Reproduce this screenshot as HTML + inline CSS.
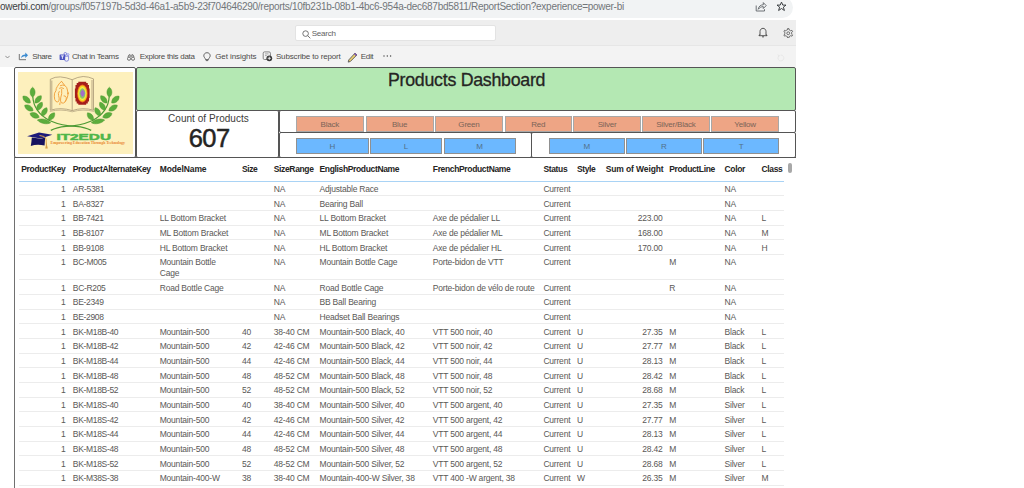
<!DOCTYPE html>
<html><head><meta charset="utf-8">
<style>
*{box-sizing:border-box;margin:0;padding:0}
html,body{width:1024px;height:488px;overflow:hidden;background:#fff;font-family:"Liberation Sans",sans-serif}
.abs{position:absolute}
#url{position:absolute;left:-20px;top:-3.5px;width:813px;height:21px;background:#f1f3f4;border-radius:0 10.5px 10.5px 0}
#urltext{position:absolute;left:0;top:0.8px;font-size:10px;line-height:12px;color:#72767a;white-space:nowrap;letter-spacing:-0.28px}
#urltext b{font-weight:normal;color:#3c4043}
#hdr{position:absolute;left:0;top:20px;width:796px;height:26px;background:#eeeeee;border-bottom:1px solid #e6e6e6}
#search{position:absolute;left:295px;top:24.8px;width:200.5px;height:16.6px;background:#fff;border:1px solid #e3e3e3;border-radius:2px}
#search span{position:absolute;left:15.7px;top:3px;font-size:8px;line-height:10px;color:#616161;letter-spacing:-0.22px}
#act{position:absolute;left:0;top:46px;width:796px;height:21px;background:#f3f3f3}
.ai{position:absolute;top:52px;font-size:8px;line-height:10px;color:#4d4b49;white-space:nowrap}
.box{position:absolute;border:1.5px solid #555;background:#fff;border-radius:2px}
.th{position:absolute;top:164px;font-size:8.5px;line-height:10px;font-weight:bold;color:#252423;white-space:nowrap;letter-spacing:-0.35px}
.row{position:absolute;left:0;width:1024px}
.row::after{content:"";position:absolute;left:19px;width:765px;bottom:0;height:1px;background:#ececec}
.td{position:absolute;top:2.4px;font-size:8.5px;line-height:10.45px;color:#5a5856;white-space:nowrap;letter-spacing:-0.2px}
.r{text-align:right}
.btn{position:absolute;background:#eea585;border:1px solid #a8a8a8;font-size:8px;line-height:15.5px;text-align:center;color:#7a6458;letter-spacing:-0.2px}
.btnb{position:absolute;background:#6cb8ff;border:1px solid #909090;font-size:8px;line-height:15.5px;text-align:center;color:#52708a}
</style></head><body>
<div id="url"></div>
<div id="urltext"><b>owerbi.com</b>/groups/f057197b-5d3d-46a1-a5b9-23f704646290/reports/10fb231b-08b1-4bc6-954a-dec687bd5811/ReportSection?experience=power-bi</div>
<!-- url icons -->
<svg class="abs" style="left:754.5px;top:1px" width="12" height="11" viewBox="0 0 12 11"><path d="M1.2 4.5V10H9.5V8.2" fill="none" stroke="#5f6368" stroke-width="0.9"/><path d="M3.2 8.3C3.6 5.3 5.8 3.8 8.3 3.8V1.6L11.2 4.6L8.3 7.5V5.6C6.3 5.6 4.6 6.6 3.2 8.3Z" fill="none" stroke="#5f6368" stroke-width="0.9" stroke-linejoin="round"/></svg>
<svg class="abs" style="left:776.3px;top:1.3px" width="11" height="11" viewBox="0 0 11 11"><path d="M5.5 1.1L6.8 4.1H10L7.4 6.1L8.4 9.5L5.5 7.5L2.6 9.5L3.6 6.1L1 4.1H4.2Z" fill="none" stroke="#3c4043" stroke-width="1" stroke-linejoin="round"/></svg>
<div id="hdr"></div>
<div id="search">
<svg class="abs" style="left:5.5px;top:3.8px" width="9" height="9" viewBox="0 0 9 9"><circle cx="3.6" cy="3.6" r="2.8" fill="none" stroke="#666" stroke-width="0.9"/><path d="M5.6 5.6L8.3 8.3" stroke="#666" stroke-width="0.9"/></svg>
<span>Search</span></div>
<svg class="abs" style="left:758px;top:27px" width="10" height="11" viewBox="0 0 10 11"><path d="M2 8V4.5C2 2.7 3.3 1.3 5 1.3S8 2.7 8 4.5V8H9V8.7H1V8Z" fill="none" stroke="#444" stroke-width="0.9"/><path d="M4 9.5Q5 10.8 6 9.5" fill="none" stroke="#444" stroke-width="0.9"/></svg>
<svg class="abs" style="left:783.2px;top:27.7px" width="10.5" height="10.5" viewBox="0 0 11 11"><path d="M3.70,2.38 L4.57,2.02 L4.73,0.66 L6.27,0.66 L6.43,2.02 L7.30,2.38 L8.05,2.95 L9.31,2.42 L10.07,3.74 L8.98,4.57 L9.10,5.50 L8.98,6.43 L10.07,7.26 L9.31,8.58 L8.05,8.05 L7.30,8.62 L6.43,8.98 L6.27,10.34 L4.73,10.34 L4.57,8.98 L3.70,8.62 L2.95,8.05 L1.69,8.58 L0.93,7.26 L2.02,6.43 L1.90,5.50 L2.02,4.57 L0.93,3.74 L1.69,2.42 L2.95,2.95Z" fill="none" stroke="#4a4a4a" stroke-width="0.8" stroke-linejoin="round"/><circle cx="5.5" cy="5.5" r="1.5" fill="none" stroke="#4a4a4a" stroke-width="0.8"/></svg>
<div id="act"></div>
<svg class="abs" style="left:776.5px;top:53.5px" width="8" height="8" viewBox="0 0 9 9"><path d="M2 2.2A3.3 3.3 0 1 0 4.5 1.2" fill="none" stroke="#e4e4e4" stroke-width="0.9"/><path d="M1 0.6L2.2 2.6L3.8 1" fill="none" stroke="#e4e4e4" stroke-width="0.9"/></svg>
<svg class="abs" style="left:5px;top:55px" width="5" height="4" viewBox="0 0 5 4"><path d="M0.3 0.8L2.5 3L4.7 0.8" fill="none" stroke="#777" stroke-width="0.8"/></svg>
<svg class="abs" style="left:18px;top:51px" width="11" height="10" viewBox="0 0 11 10"><path d="M1.3 3V8.7H8" fill="none" stroke="#666" stroke-width="0.9"/><path d="M3 7.2C3.2 4.6 5.2 3.6 7.3 3.6V1.6L10 4.3L7.3 7V5.3C5.6 5.3 4.2 5.9 3 7.2Z" fill="#3a8ad0"/></svg>
<div class="ai" style="left:32.3px;letter-spacing:-0.41px">Share</div>
<svg class="abs" style="left:58.5px;top:51.5px" width="11" height="10" viewBox="0 0 11 10"><circle cx="6.3" cy="1.8" r="1.3" fill="none" stroke="#6a70d8" stroke-width="0.8"/><circle cx="9" cy="2.6" r="1" fill="none" stroke="#7b83eb" stroke-width="0.7"/><path d="M5.3 4.2H9.6V7.3Q9.6 9.2 7.6 9.2Q5.6 9.2 5.3 7.3Z" fill="none" stroke="#6a70d8" stroke-width="0.8"/><rect x="0.6" y="2.5" width="5.6" height="5.4" rx="0.6" fill="#4c53c2"/><path d="M1.9 3.9H4.9M3.4 3.9V6.9" stroke="#fff" stroke-width="0.85"/></svg>
<div class="ai" style="left:71.9px;letter-spacing:-0.33px">Chat in Teams</div>
<svg class="abs" style="left:126.5px;top:53.5px" width="8" height="7" viewBox="0 0 8 7"><circle cx="2" cy="4.7" r="1.6" fill="none" stroke="#555" stroke-width="0.8"/><circle cx="6" cy="4.7" r="1.6" fill="none" stroke="#555" stroke-width="0.8"/><path d="M1 3L2 0.8H3.2V3M4.8 3V0.8H6L7 3" fill="none" stroke="#555" stroke-width="0.8"/></svg>
<div class="ai" style="left:139.7px;letter-spacing:-0.27px">Explore this data</div>
<svg class="abs" style="left:202.5px;top:52px" width="8" height="10" viewBox="0 0 8 10"><path d="M4 0.7C2 0.7 0.8 2.2 0.8 3.8C0.8 5.3 2.3 6 2.5 7.6H5.5C5.7 6 7.2 5.3 7.2 3.8C7.2 2.2 6 0.7 4 0.7Z" fill="none" stroke="#444" stroke-width="0.8"/><path d="M2.8 8.6H5.2" stroke="#444" stroke-width="0.8"/></svg>
<div class="ai" style="left:215.2px;letter-spacing:-0.08px">Get insights</div>
<svg class="abs" style="left:261.5px;top:51.3px" width="12" height="11" viewBox="0 0 12 11"><rect x="1.2" y="0.9" width="7.2" height="7.6" rx="1.3" fill="none" stroke="#777" stroke-width="0.9"/><path d="M3 2.9H6.5M3 4.6H4.8" stroke="#888" stroke-width="0.7"/><circle cx="7.3" cy="7.3" r="2.9" fill="#3a3a3a"/><path d="M7.3 5.7V8.9M5.7 7.3H8.9" stroke="#fff" stroke-width="0.8"/></svg>
<div class="ai" style="left:275.9px;letter-spacing:-0.15px">Subscribe to report</div>
<svg class="abs" style="left:346.5px;top:51.5px" width="11" height="11" viewBox="0 0 11 11"><path d="M8 1.2L9.8 3L3.3 9.5L1.2 10.1L1.8 7.9Z" fill="#edd070" stroke="#555" stroke-width="0.9" stroke-linejoin="round"/><path d="M8 1.2L9.8 3L9 3.8L7.2 2Z" fill="#8a5cc0" stroke="#6a4a9a" stroke-width="0.6"/></svg>
<div class="ai" style="left:360.8px;letter-spacing:-0.35px">Edit</div>
<svg class="abs" style="left:382.7px;top:55.4px" width="9" height="2" viewBox="0 0 9 2"><circle cx="1" cy="1" r="0.7" fill="#444"/><circle cx="4.3" cy="1" r="0.7" fill="#444"/><circle cx="7.6" cy="1" r="0.7" fill="#444"/></svg>

<!-- dashboard -->
<div class="box" style="left:14px;top:67px;width:122px;height:91px"></div>
<div class="abs" style="left:18px;top:72px;width:115px;height:82px;background:#fdf0bd"></div>
<svg class="abs" style="left:0;top:0" width="140" height="160" viewBox="0 0 140 160">

<!-- book -->
<g fill="none" stroke="#a39272" stroke-width="0.75">
<path d="M50.3,79.3 Q55,76.6 60.3,76.9 Q66,77.3 72.2,79.7 Q78,76.8 83.2,76.5 Q88.5,76.6 93.5,78.9"/>
<path d="M50.3,79.3 V110.2 M93.5,78.9 V110.2 M72.2,79.7 V110.6 M51.8,80.5 V109.4 M92,80 V109.4"/>
<path d="M50.3,110.2 Q61,107 72.2,110.6 Q83,107 93.5,110.2"/>
<path d="M49.8,111.4 Q61,108.6 72.2,111.8 Q83,108.6 94,111.4" stroke-width="0.6"/>
</g>
<!-- ganesh -->
<g fill="none" stroke="#f2a543" stroke-width="1" stroke-linecap="round" stroke-linejoin="round">
<path d="M61.5,81.3 L64.6,85.3 Q67.3,87.3 67.4,90 Q68.4,93 67.8,95.8 Q67,99.2 65.3,101.3"/>
<path d="M61.5,81.3 Q58.6,84 57.4,86.4 Q55.8,88.5 56,90.6 Q54,93 54.3,96.2 Q54.3,100.2 56,101.6 Q58,102.6 59,100.8 Q59.6,98.2 58.6,95.6 Q57.8,93.5 59.2,91.5"/>
<path d="M61.7,89.3 Q62.2,94 60.7,97.9 Q60,101.4 61.4,102.9 Q63.4,103.8 65.2,101.9 Q66.6,99.6 66.3,97.6 Q65.6,95.5 64,95.8"/>
<path d="M59.5,88.2 Q61.5,86.8 63.6,88.4 M64.6,85.3 Q62.5,84.6 60.4,85.6 M60,102.8 L59.8,104.6"/>
</g>
<circle cx="68" cy="93.3" r="1" fill="#f2a543"/>
<!-- mandala -->
<path d="M78.3,81.8 H86.2 V83 H87.8 V85 H89 V88.5 H89.6 V98 H89 V101.5 H87.8 V103.5 H86.2 V104.7 H78.3 V103.5 H76.7 V101.5 H75.5 V98 H74.9 V88.5 H75.5 V85 H76.7 V83 H78.3Z" fill="#a51e1a"/>
<ellipse cx="82.4" cy="93.5" rx="5.3" ry="9" fill="#ee6a1e"/>
<ellipse cx="82.4" cy="93.5" rx="4.6" ry="8.1" fill="#f7d41c"/>
<ellipse cx="82.4" cy="93.5" rx="3.7" ry="6.5" fill="#f2ef5a"/>
<ellipse cx="82.4" cy="93.5" rx="3" ry="5.3" fill="#8dc860"/>
<path d="M82.6,89.2 L85,93.3 L82.6,97.5 L80.3,93.3Z" fill="#a771cc"/>
<ellipse cx="82.5" cy="93.3" rx="1.8" ry="2.9" fill="#a070c8"/>
<!-- laurel left -->
<g stroke="#4c9a34" stroke-width="1.2" fill="none"><path d="M32.8,96.5 Q33.5,112 50,120.8 Q62,126 76,126.4 Q85.5,127.3 91.2,130.4"/><path d="M109.2,96.5 Q108.5,112 92,120.8 Q80,126 66,126.4 Q56.5,127.3 50.8,130.4"/></g>
<path d="M0,-5 C3.3,-2.5 3.3,2.5 0,5 C-3.3,2.5 -3.3,-2.5 0,-5Z" fill="#5cad3c" stroke="#4e9a33" stroke-width="0.5" transform="translate(32.6,92.2) rotate(0) scale(1.0)"/>
<path d="M0,-5 C3.3,-2.5 3.3,2.5 0,5 C-3.3,2.5 -3.3,-2.5 0,-5Z" fill="#5cad3c" stroke="#4e9a33" stroke-width="0.5" transform="translate(109.4,92.2) rotate(0) scale(1.0)"/>
<path d="M0,-5 C3.3,-2.5 3.3,2.5 0,5 C-3.3,2.5 -3.3,-2.5 0,-5Z" fill="#5cad3c" stroke="#4e9a33" stroke-width="0.5" transform="translate(26.6,99.6) rotate(-47) scale(1.0)"/>
<path d="M0,-5 C3.3,-2.5 3.3,2.5 0,5 C-3.3,2.5 -3.3,-2.5 0,-5Z" fill="#5cad3c" stroke="#4e9a33" stroke-width="0.5" transform="translate(115.4,99.6) rotate(47) scale(1.0)"/>
<path d="M0,-5 C3.3,-2.5 3.3,2.5 0,5 C-3.3,2.5 -3.3,-2.5 0,-5Z" fill="#5cad3c" stroke="#4e9a33" stroke-width="0.5" transform="translate(28.9,108.0) rotate(-57) scale(1.0)"/>
<path d="M0,-5 C3.3,-2.5 3.3,2.5 0,5 C-3.3,2.5 -3.3,-2.5 0,-5Z" fill="#5cad3c" stroke="#4e9a33" stroke-width="0.5" transform="translate(113.1,108.0) rotate(57) scale(1.0)"/>
<path d="M0,-5 C3.3,-2.5 3.3,2.5 0,5 C-3.3,2.5 -3.3,-2.5 0,-5Z" fill="#5cad3c" stroke="#4e9a33" stroke-width="0.5" transform="translate(34.6,115.4) rotate(-67) scale(1.0)"/>
<path d="M0,-5 C3.3,-2.5 3.3,2.5 0,5 C-3.3,2.5 -3.3,-2.5 0,-5Z" fill="#5cad3c" stroke="#4e9a33" stroke-width="0.5" transform="translate(107.4,115.4) rotate(67) scale(1.0)"/>
<path d="M0,-5 C3.3,-2.5 3.3,2.5 0,5 C-3.3,2.5 -3.3,-2.5 0,-5Z" fill="#5cad3c" stroke="#4e9a33" stroke-width="0.5" transform="translate(44.0,121.4) rotate(-78) scale(0.85,1.35)"/>
<path d="M0,-5 C3.3,-2.5 3.3,2.5 0,5 C-3.3,2.5 -3.3,-2.5 0,-5Z" fill="#5cad3c" stroke="#4e9a33" stroke-width="0.5" transform="translate(98.0,121.4) rotate(78) scale(0.85,1.35)"/>
<path d="M0,-5 C3.3,-2.5 3.3,2.5 0,5 C-3.3,2.5 -3.3,-2.5 0,-5Z" fill="#5cad3c" stroke="#4e9a33" stroke-width="0.5" transform="translate(38.2,99.4) rotate(40) scale(0.95)"/>
<path d="M0,-5 C3.3,-2.5 3.3,2.5 0,5 C-3.3,2.5 -3.3,-2.5 0,-5Z" fill="#5cad3c" stroke="#4e9a33" stroke-width="0.5" transform="translate(103.8,99.4) rotate(-40) scale(0.95)"/>
<path d="M0,-5 C3.3,-2.5 3.3,2.5 0,5 C-3.3,2.5 -3.3,-2.5 0,-5Z" fill="#5cad3c" stroke="#4e9a33" stroke-width="0.5" transform="translate(39.6,106.3) rotate(33) scale(0.95)"/>
<path d="M0,-5 C3.3,-2.5 3.3,2.5 0,5 C-3.3,2.5 -3.3,-2.5 0,-5Z" fill="#5cad3c" stroke="#4e9a33" stroke-width="0.5" transform="translate(102.4,106.3) rotate(-33) scale(0.95)"/>
<path d="M0,-5 C3.3,-2.5 3.3,2.5 0,5 C-3.3,2.5 -3.3,-2.5 0,-5Z" fill="#5cad3c" stroke="#4e9a33" stroke-width="0.5" transform="translate(44.4,111.8) rotate(31) scale(0.95)"/>
<path d="M0,-5 C3.3,-2.5 3.3,2.5 0,5 C-3.3,2.5 -3.3,-2.5 0,-5Z" fill="#5cad3c" stroke="#4e9a33" stroke-width="0.5" transform="translate(97.6,111.8) rotate(-31) scale(0.95)"/>
<path d="M0,-5 C3.3,-2.5 3.3,2.5 0,5 C-3.3,2.5 -3.3,-2.5 0,-5Z" fill="#5cad3c" stroke="#4e9a33" stroke-width="0.5" transform="translate(51.6,116.6) rotate(38) scale(0.95)"/>
<path d="M0,-5 C3.3,-2.5 3.3,2.5 0,5 C-3.3,2.5 -3.3,-2.5 0,-5Z" fill="#5cad3c" stroke="#4e9a33" stroke-width="0.5" transform="translate(90.4,116.6) rotate(-38) scale(0.95)"/>
<!-- cap -->
<path d="M27.1,136.2 L39,132.6 L52.3,134.8 L41,138.6 Z" fill="#1d1a7a"/>
<path d="M31.8,137.4 Q31.5,142 30.8,146 Q37,143.8 44.6,145.6 Q44.8,141 45.3,137.2 L41,138.8 Z" fill="#16125f"/>
<path d="M39.5,135.5 Q45,136 46,138.5 L46.5,147.5" fill="none" stroke="#d9a04a" stroke-width="1"/>
<path d="M46.5,143 L47.8,148.5 H45.2 Z" fill="#d9a04a"/>
<text x="56.4" y="139.7" font-family="Liberation Sans" font-weight="bold" font-size="8.9" fill="#4fb649" stroke="#4fb649" stroke-width="0.45" textLength="54.6" lengthAdjust="spacingAndGlyphs">IT2EDU</text>
<text x="50.6" y="144.3" font-family="Liberation Serif" font-weight="bold" font-size="3.4" fill="#e8862e" textLength="74.4" lengthAdjust="spacingAndGlyphs">Empowering Education Through Technology</text>
</svg>
<div class="box" style="left:135.5px;top:67px;width:660px;height:44px;background:#b4e8b3"></div>
<div class="abs" style="left:388px;top:71px;font-size:17.8px;line-height:18px;color:#252423;letter-spacing:-0.27px;white-space:nowrap;-webkit-text-stroke:0.3px #252423">Products Dashboard</div>
<div class="box" style="left:135.5px;top:110px;width:143.5px;height:48px"></div>
<div class="abs" style="left:168px;top:113px;font-size:10px;line-height:11px;color:#403c3a;white-space:nowrap;letter-spacing:0.05px">Count of Products</div>
<div class="abs" style="left:188.7px;top:125.6px;font-size:25.5px;line-height:24px;color:#252423;white-space:nowrap;letter-spacing:-0.5px;-webkit-text-stroke:0.5px #252423">607</div>
<div class="box" style="left:278.5px;top:110px;width:517px;height:23px"></div>
<div class="box" style="left:278.5px;top:132px;width:253.5px;height:26px"></div>
<div class="box" style="left:530.5px;top:132px;width:265px;height:26px"></div>
<div class="btn" style="left:296.2px;top:116.3px;width:67.4px;height:15.6px">Black</div>
<div class="btn" style="left:365.5px;top:116.3px;width:68.1px;height:15.6px">Blue</div>
<div class="btn" style="left:435.3px;top:116.3px;width:67.4px;height:15.6px">Green</div>
<div class="btn" style="left:504.5px;top:116.3px;width:67.5px;height:15.6px">Red</div>
<div class="btn" style="left:573.4px;top:116.3px;width:67.4px;height:15.6px">Silver</div>
<div class="btn" style="left:642.2px;top:116.3px;width:67.5px;height:15.6px">Silver/Black</div>
<div class="btn" style="left:711.4px;top:116.3px;width:67.5px;height:15.6px">Yellow</div>
<div class="btnb" style="left:296.2px;top:137.9px;width:72.6px;height:15.9px">H</div>
<div class="btnb" style="left:370.2px;top:137.9px;width:71.6px;height:15.9px">L</div>
<div class="btnb" style="left:443.6px;top:137.9px;width:72.1px;height:15.9px">M</div>
<div class="btnb" style="left:548.9px;top:137.9px;width:76.0px;height:15.9px">M</div>
<div class="btnb" style="left:626.25px;top:137.9px;width:75.5px;height:15.9px">R</div>
<div class="btnb" style="left:703.3px;top:137.9px;width:76.0px;height:15.9px">T</div>

<!-- table -->
<div class="abs" style="left:13.8px;top:157px;width:782px;height:340px;border-left:1.3px solid #707070;border-top:1.3px solid #555"></div>
<div class="abs" style="left:19px;top:180.5px;width:765px;height:1.5px;background:#a9d3f5"></div>
<div class="abs" style="left:788px;top:163px;width:3.5px;height:10px;background:#a8a8a8;border-radius:2px"></div>
<div class="th r" style="right:958.50px">ProductKey</div>
<div class="th" style="left:72.80px">ProductAlternateKey</div>
<div class="th" style="left:159.70px;letter-spacing:-0.1px">ModelName</div>
<div class="th" style="left:241.90px">Size</div>
<div class="th" style="left:273.75px">SizeRange</div>
<div class="th" style="left:319.50px">EnglishProductName</div>
<div class="th" style="left:432.80px">FrenchProductName</div>
<div class="th" style="left:543.40px">Status</div>
<div class="th" style="left:576.90px">Style</div>
<div class="th r" style="right:360.50px;letter-spacing:-0.12px">Sum of Weight</div>
<div class="th" style="left:669.20px">ProductLine</div>
<div class="th" style="left:724.50px">Color</div>
<div class="th" style="left:761.50px">Class</div>
<div class="row" style="top:181.73px;height:14.67px">
<span class="td r" style="right:958.50px">1</span>
<span class="td" style="left:72.80px;letter-spacing:-0.32px">AR-5381</span>
<span class="td" style="left:273.75px">NA</span>
<span class="td" style="left:319.50px">Adjustable Race</span>
<span class="td" style="left:543.40px">Current</span>
<span class="td" style="left:724.50px">NA</span>
</div>
<div class="row" style="top:196.40px;height:14.67px">
<span class="td r" style="right:958.50px">1</span>
<span class="td" style="left:72.80px;letter-spacing:-0.32px">BA-8327</span>
<span class="td" style="left:273.75px">NA</span>
<span class="td" style="left:319.50px">Bearing Ball</span>
<span class="td" style="left:543.40px">Current</span>
<span class="td" style="left:724.50px">NA</span>
</div>
<div class="row" style="top:211.07px;height:14.67px">
<span class="td r" style="right:958.50px">1</span>
<span class="td" style="left:72.80px;letter-spacing:-0.32px">BB-7421</span>
<span class="td" style="left:159.70px">LL Bottom Bracket</span>
<span class="td" style="left:273.75px">NA</span>
<span class="td" style="left:319.50px">LL Bottom Bracket</span>
<span class="td" style="left:432.80px">Axe de pédalier LL</span>
<span class="td" style="left:543.40px">Current</span>
<span class="td r" style="right:361.50px">223.00</span>
<span class="td" style="left:724.50px">NA</span>
<span class="td" style="left:761.50px">L</span>
</div>
<div class="row" style="top:225.74px;height:14.67px">
<span class="td r" style="right:958.50px">1</span>
<span class="td" style="left:72.80px;letter-spacing:-0.32px">BB-8107</span>
<span class="td" style="left:159.70px">ML Bottom Bracket</span>
<span class="td" style="left:273.75px">NA</span>
<span class="td" style="left:319.50px">ML Bottom Bracket</span>
<span class="td" style="left:432.80px">Axe de pédalier ML</span>
<span class="td" style="left:543.40px">Current</span>
<span class="td r" style="right:361.50px">168.00</span>
<span class="td" style="left:724.50px">NA</span>
<span class="td" style="left:761.50px">M</span>
</div>
<div class="row" style="top:240.41px;height:14.67px">
<span class="td r" style="right:958.50px">1</span>
<span class="td" style="left:72.80px;letter-spacing:-0.32px">BB-9108</span>
<span class="td" style="left:159.70px">HL Bottom Bracket</span>
<span class="td" style="left:273.75px">NA</span>
<span class="td" style="left:319.50px">HL Bottom Bracket</span>
<span class="td" style="left:432.80px">Axe de pédalier HL</span>
<span class="td" style="left:543.40px">Current</span>
<span class="td r" style="right:361.50px">170.00</span>
<span class="td" style="left:724.50px">NA</span>
<span class="td" style="left:761.50px">H</span>
</div>
<div class="row" style="top:255.08px;height:25.12px">
<span class="td r" style="right:958.50px">1</span>
<span class="td" style="left:72.80px;letter-spacing:-0.32px">BC-M005</span>
<span class="td" style="left:159.70px">Mountain Bottle<br>Cage</span>
<span class="td" style="left:273.75px">NA</span>
<span class="td" style="left:319.50px">Mountain Bottle Cage</span>
<span class="td" style="left:432.80px">Porte-bidon de VTT</span>
<span class="td" style="left:543.40px">Current</span>
<span class="td" style="left:669.20px">M</span>
<span class="td" style="left:724.50px">NA</span>
</div>
<div class="row" style="top:280.20px;height:14.67px">
<span class="td r" style="right:958.50px">1</span>
<span class="td" style="left:72.80px;letter-spacing:-0.32px">BC-R205</span>
<span class="td" style="left:159.70px">Road Bottle Cage</span>
<span class="td" style="left:273.75px">NA</span>
<span class="td" style="left:319.50px">Road Bottle Cage</span>
<span class="td" style="left:432.80px">Porte-bidon de vélo de route</span>
<span class="td" style="left:543.40px">Current</span>
<span class="td" style="left:669.20px">R</span>
<span class="td" style="left:724.50px">NA</span>
</div>
<div class="row" style="top:294.87px;height:14.67px">
<span class="td r" style="right:958.50px">1</span>
<span class="td" style="left:72.80px;letter-spacing:-0.32px">BE-2349</span>
<span class="td" style="left:273.75px">NA</span>
<span class="td" style="left:319.50px">BB Ball Bearing</span>
<span class="td" style="left:543.40px">Current</span>
<span class="td" style="left:724.50px">NA</span>
</div>
<div class="row" style="top:309.54px;height:14.67px">
<span class="td r" style="right:958.50px">1</span>
<span class="td" style="left:72.80px;letter-spacing:-0.32px">BE-2908</span>
<span class="td" style="left:273.75px">NA</span>
<span class="td" style="left:319.50px">Headset Ball Bearings</span>
<span class="td" style="left:543.40px">Current</span>
<span class="td" style="left:724.50px">NA</span>
</div>
<div class="row" style="top:324.21px;height:14.67px">
<span class="td r" style="right:958.50px">1</span>
<span class="td" style="left:72.80px;letter-spacing:-0.32px">BK-M18B-40</span>
<span class="td" style="left:159.70px">Mountain-500</span>
<span class="td" style="left:241.90px">40</span>
<span class="td" style="left:273.75px">38-40 CM</span>
<span class="td" style="left:319.50px">Mountain-500 Black, 40</span>
<span class="td" style="left:432.80px">VTT 500 noir, 40</span>
<span class="td" style="left:543.40px">Current</span>
<span class="td" style="left:576.90px">U</span>
<span class="td r" style="right:361.50px">27.35</span>
<span class="td" style="left:669.20px">M</span>
<span class="td" style="left:724.50px">Black</span>
<span class="td" style="left:761.50px">L</span>
</div>
<div class="row" style="top:338.88px;height:14.67px">
<span class="td r" style="right:958.50px">1</span>
<span class="td" style="left:72.80px;letter-spacing:-0.32px">BK-M18B-42</span>
<span class="td" style="left:159.70px">Mountain-500</span>
<span class="td" style="left:241.90px">42</span>
<span class="td" style="left:273.75px">42-46 CM</span>
<span class="td" style="left:319.50px">Mountain-500 Black, 42</span>
<span class="td" style="left:432.80px">VTT 500 noir, 42</span>
<span class="td" style="left:543.40px">Current</span>
<span class="td" style="left:576.90px">U</span>
<span class="td r" style="right:361.50px">27.77</span>
<span class="td" style="left:669.20px">M</span>
<span class="td" style="left:724.50px">Black</span>
<span class="td" style="left:761.50px">L</span>
</div>
<div class="row" style="top:353.55px;height:14.67px">
<span class="td r" style="right:958.50px">1</span>
<span class="td" style="left:72.80px;letter-spacing:-0.32px">BK-M18B-44</span>
<span class="td" style="left:159.70px">Mountain-500</span>
<span class="td" style="left:241.90px">44</span>
<span class="td" style="left:273.75px">42-46 CM</span>
<span class="td" style="left:319.50px">Mountain-500 Black, 44</span>
<span class="td" style="left:432.80px">VTT 500 noir, 44</span>
<span class="td" style="left:543.40px">Current</span>
<span class="td" style="left:576.90px">U</span>
<span class="td r" style="right:361.50px">28.13</span>
<span class="td" style="left:669.20px">M</span>
<span class="td" style="left:724.50px">Black</span>
<span class="td" style="left:761.50px">L</span>
</div>
<div class="row" style="top:368.22px;height:14.67px">
<span class="td r" style="right:958.50px">1</span>
<span class="td" style="left:72.80px;letter-spacing:-0.32px">BK-M18B-48</span>
<span class="td" style="left:159.70px">Mountain-500</span>
<span class="td" style="left:241.90px">48</span>
<span class="td" style="left:273.75px">48-52 CM</span>
<span class="td" style="left:319.50px">Mountain-500 Black, 48</span>
<span class="td" style="left:432.80px">VTT 500 noir, 48</span>
<span class="td" style="left:543.40px">Current</span>
<span class="td" style="left:576.90px">U</span>
<span class="td r" style="right:361.50px">28.42</span>
<span class="td" style="left:669.20px">M</span>
<span class="td" style="left:724.50px">Black</span>
<span class="td" style="left:761.50px">L</span>
</div>
<div class="row" style="top:382.89px;height:14.67px">
<span class="td r" style="right:958.50px">1</span>
<span class="td" style="left:72.80px;letter-spacing:-0.32px">BK-M18B-52</span>
<span class="td" style="left:159.70px">Mountain-500</span>
<span class="td" style="left:241.90px">52</span>
<span class="td" style="left:273.75px">48-52 CM</span>
<span class="td" style="left:319.50px">Mountain-500 Black, 52</span>
<span class="td" style="left:432.80px">VTT 500 noir, 52</span>
<span class="td" style="left:543.40px">Current</span>
<span class="td" style="left:576.90px">U</span>
<span class="td r" style="right:361.50px">28.68</span>
<span class="td" style="left:669.20px">M</span>
<span class="td" style="left:724.50px">Black</span>
<span class="td" style="left:761.50px">L</span>
</div>
<div class="row" style="top:397.56px;height:14.67px">
<span class="td r" style="right:958.50px">1</span>
<span class="td" style="left:72.80px;letter-spacing:-0.32px">BK-M18S-40</span>
<span class="td" style="left:159.70px">Mountain-500</span>
<span class="td" style="left:241.90px">40</span>
<span class="td" style="left:273.75px">38-40 CM</span>
<span class="td" style="left:319.50px">Mountain-500 Silver, 40</span>
<span class="td" style="left:432.80px">VTT 500 argent, 40</span>
<span class="td" style="left:543.40px">Current</span>
<span class="td" style="left:576.90px">U</span>
<span class="td r" style="right:361.50px">27.35</span>
<span class="td" style="left:669.20px">M</span>
<span class="td" style="left:724.50px">Silver</span>
<span class="td" style="left:761.50px">L</span>
</div>
<div class="row" style="top:412.23px;height:14.67px">
<span class="td r" style="right:958.50px">1</span>
<span class="td" style="left:72.80px;letter-spacing:-0.32px">BK-M18S-42</span>
<span class="td" style="left:159.70px">Mountain-500</span>
<span class="td" style="left:241.90px">42</span>
<span class="td" style="left:273.75px">42-46 CM</span>
<span class="td" style="left:319.50px">Mountain-500 Silver, 42</span>
<span class="td" style="left:432.80px">VTT 500 argent, 42</span>
<span class="td" style="left:543.40px">Current</span>
<span class="td" style="left:576.90px">U</span>
<span class="td r" style="right:361.50px">27.77</span>
<span class="td" style="left:669.20px">M</span>
<span class="td" style="left:724.50px">Silver</span>
<span class="td" style="left:761.50px">L</span>
</div>
<div class="row" style="top:426.90px;height:14.67px">
<span class="td r" style="right:958.50px">1</span>
<span class="td" style="left:72.80px;letter-spacing:-0.32px">BK-M18S-44</span>
<span class="td" style="left:159.70px">Mountain-500</span>
<span class="td" style="left:241.90px">44</span>
<span class="td" style="left:273.75px">42-46 CM</span>
<span class="td" style="left:319.50px">Mountain-500 Silver, 44</span>
<span class="td" style="left:432.80px">VTT 500 argent, 44</span>
<span class="td" style="left:543.40px">Current</span>
<span class="td" style="left:576.90px">U</span>
<span class="td r" style="right:361.50px">28.13</span>
<span class="td" style="left:669.20px">M</span>
<span class="td" style="left:724.50px">Silver</span>
<span class="td" style="left:761.50px">L</span>
</div>
<div class="row" style="top:441.57px;height:14.67px">
<span class="td r" style="right:958.50px">1</span>
<span class="td" style="left:72.80px;letter-spacing:-0.32px">BK-M18S-48</span>
<span class="td" style="left:159.70px">Mountain-500</span>
<span class="td" style="left:241.90px">48</span>
<span class="td" style="left:273.75px">48-52 CM</span>
<span class="td" style="left:319.50px">Mountain-500 Silver, 48</span>
<span class="td" style="left:432.80px">VTT 500 argent, 48</span>
<span class="td" style="left:543.40px">Current</span>
<span class="td" style="left:576.90px">U</span>
<span class="td r" style="right:361.50px">28.42</span>
<span class="td" style="left:669.20px">M</span>
<span class="td" style="left:724.50px">Silver</span>
<span class="td" style="left:761.50px">L</span>
</div>
<div class="row" style="top:456.24px;height:14.67px">
<span class="td r" style="right:958.50px">1</span>
<span class="td" style="left:72.80px;letter-spacing:-0.32px">BK-M18S-52</span>
<span class="td" style="left:159.70px">Mountain-500</span>
<span class="td" style="left:241.90px">52</span>
<span class="td" style="left:273.75px">48-52 CM</span>
<span class="td" style="left:319.50px">Mountain-500 Silver, 52</span>
<span class="td" style="left:432.80px">VTT 500 argent, 52</span>
<span class="td" style="left:543.40px">Current</span>
<span class="td" style="left:576.90px">U</span>
<span class="td r" style="right:361.50px">28.68</span>
<span class="td" style="left:669.20px">M</span>
<span class="td" style="left:724.50px">Silver</span>
<span class="td" style="left:761.50px">L</span>
</div>
<div class="row" style="top:470.91px;height:14.67px">
<span class="td r" style="right:958.50px">1</span>
<span class="td" style="left:72.80px;letter-spacing:-0.32px">BK-M38S-38</span>
<span class="td" style="left:159.70px">Mountain-400-W</span>
<span class="td" style="left:241.90px">38</span>
<span class="td" style="left:273.75px">38-40 CM</span>
<span class="td" style="left:319.50px">Mountain-400-W Silver, 38</span>
<span class="td" style="left:432.80px">VTT 400 -W argent, 38</span>
<span class="td" style="left:543.40px">Current</span>
<span class="td" style="left:576.90px">W</span>
<span class="td r" style="right:361.50px">26.35</span>
<span class="td" style="left:669.20px">M</span>
<span class="td" style="left:724.50px">Silver</span>
<span class="td" style="left:761.50px">M</span>
</div>
</body></html>
